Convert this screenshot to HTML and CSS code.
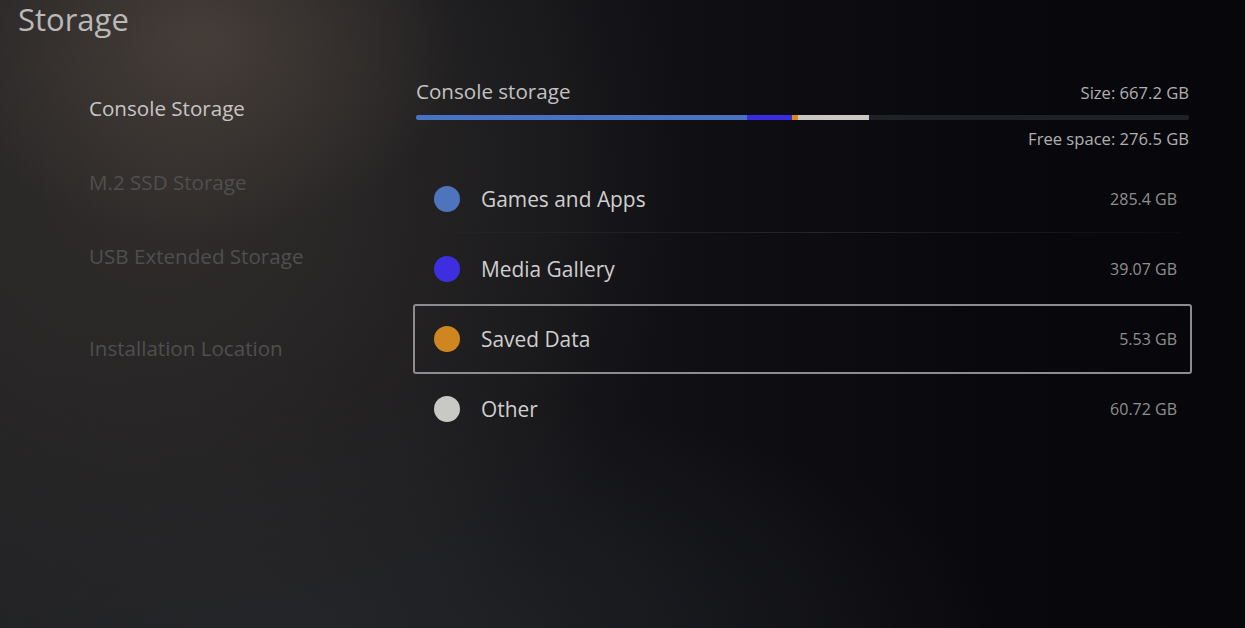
FILE: index.html
```html
<!DOCTYPE html>
<html lang="en">
<head>
    <meta charset="UTF-8">
    <meta name="viewport" content="width=device-width, initial-scale=1.0">
    <title>Storage</title>
    <link rel="stylesheet" href="styles.css">
</head>
<body>
    <div class="screen">
        <h1 class="page-title">Storage</h1>

        <div class="layout">
            <nav class="side-nav">
                <div class="nav-item active">Console Storage</div>
                <div class="nav-item">M.2 SSD Storage</div>
                <div class="nav-item">USB Extended Storage</div>
                <div class="nav-item gap-above">Installation Location</div>
            </nav>

            <section class="storage-panel">
                <div class="panel-head">
                    <span class="panel-title">Console storage</span>
                    <span class="panel-size">Size: 667.2 GB</span>
                </div>

                <div class="usage-bar">
                    <div class="usage-seg games" style="width: 42.78%"></div>
                    <div class="usage-seg media" style="width: 5.86%"></div>
                    <div class="usage-seg saved" style="width: 0.83%"></div>
                    <div class="usage-seg other" style="width: 9.1%"></div>
                </div>

                <div class="free-space">Free space: 276.5 GB</div>

                <ul class="category-list">
                    <li class="category">
                        <span class="dot games"></span>
                        <span class="category-name">Games and Apps</span>
                        <span class="category-size">285.4 GB</span>
                    </li>
                    <li class="category">
                        <span class="dot media"></span>
                        <span class="category-name">Media Gallery</span>
                        <span class="category-size">39.07 GB</span>
                    </li>
                    <li class="category selected">
                        <span class="dot saved"></span>
                        <span class="category-name">Saved Data</span>
                        <span class="category-size">5.53 GB</span>
                    </li>
                    <li class="category">
                        <span class="dot other"></span>
                        <span class="category-name">Other</span>
                        <span class="category-size">60.72 GB</span>
                    </li>
                </ul>
            </section>
        </div>
    </div>
</body>
</html>
```

FILE: styles.css
```css
* {
    margin: 0;
    padding: 0;
    box-sizing: border-box;
}

html, body {
    height: 100%;
}

body {
    font-family: 'Open Sans', 'Noto Sans', 'Liberation Sans', sans-serif;
    color: #c4c4c4;
    background-color: #0b0b10;
    overflow: hidden;
}

.screen {
    width: 100%;
    height: 100%;
    background:
        radial-gradient(ellipse 260px 200px at 200px 40px, rgba(78, 68, 62, 0.75), rgba(78, 68, 62, 0) 100%),
        radial-gradient(ellipse 520px 520px at 170px 180px, rgba(50, 46, 44, 0.9), rgba(40, 38, 38, 0) 100%),
        radial-gradient(ellipse 700px 260px at 300px 640px, rgba(36, 38, 42, 0.9), rgba(30, 31, 35, 0) 100%),
        linear-gradient(90deg, #1f1f21 0%, #19191c 30%, #0f0f14 55%, #08080d 80%, #07070b 100%);
}

.page-title {
    font-size: 31px;
    font-weight: 400;
    color: #b9b9b9;
    line-height: 38px;
    padding-left: 18px;
    height: 72px;
}

.layout {
    display: flex;
}

/* left menu */
.side-nav {
    width: 413px;
    padding-left: 89px;
    padding-top: 19px;
}

.nav-item {
    font-size: 20.6px;
    line-height: 34px;
    height: 74px;
    color: #4f4f50;
}

.nav-item.active {
    color: #c6c6c6;
}

.nav-item.gap-above {
    margin-top: 18px;
}

/* right panel */
.storage-panel {
    width: 779px;
    padding-top: 5px;
}

.panel-head {
    display: flex;
    justify-content: space-between;
    align-items: baseline;
    padding: 0 3px;
}

.panel-title {
    font-size: 20.6px;
    color: #c2c2c2;
}

.panel-size {
    font-size: 16.6px;
    color: #b0b0b0;
}

.usage-bar {
    display: flex;
    height: 5px;
    margin: 10px 3px 0;
    background-color: #202126;
    border-radius: 2px;
    overflow: hidden;
}

.usage-seg.games { background-color: #4a72c2; }
.usage-seg.media { background-color: #3a2ce2; }
.usage-seg.saved { background-color: #d88a1e; }
.usage-seg.other { background-color: #c9c8c2; }

.free-space {
    text-align: right;
    font-size: 16.6px;
    color: #b0b0b0;
    padding-right: 3px;
    margin-top: 7px;
}

.category-list {
    list-style: none;
    margin-top: 14px;
}

.category {
    display: flex;
    align-items: center;
    height: 70px;
    padding: 0 13px 0 19px;
    border: 2px solid transparent;
    position: relative;
}

.category::after {
    content: '';
    position: absolute;
    left: 40px;
    right: 10px;
    bottom: -1px;
    height: 1px;
    background: linear-gradient(90deg, rgba(60, 60, 66, 0.1), rgba(60, 60, 66, 0.5) 50%, rgba(60, 60, 66, 0.1));
}

.category.selected {
    border-color: #8d8d8f;
    border-radius: 3px;
}

.category.selected::after,
.category:nth-child(2)::after,
.category:last-child::after {
    display: none;
}

.dot {
    width: 26px;
    height: 26px;
    border-radius: 50%;
    flex-shrink: 0;
}

.dot.games { background-color: #4e74bd; }
.dot.media { background-color: #3d2fe0; }
.dot.saved { background-color: #cf8520; }
.dot.other { background-color: #c8c8c4; }

.category-name {
    flex: 1;
    font-size: 20.9px;
    color: #cfcfcf;
    margin-left: 21px;
}

.category-size {
    font-size: 16px;
    color: #8f8f90;
}
```
